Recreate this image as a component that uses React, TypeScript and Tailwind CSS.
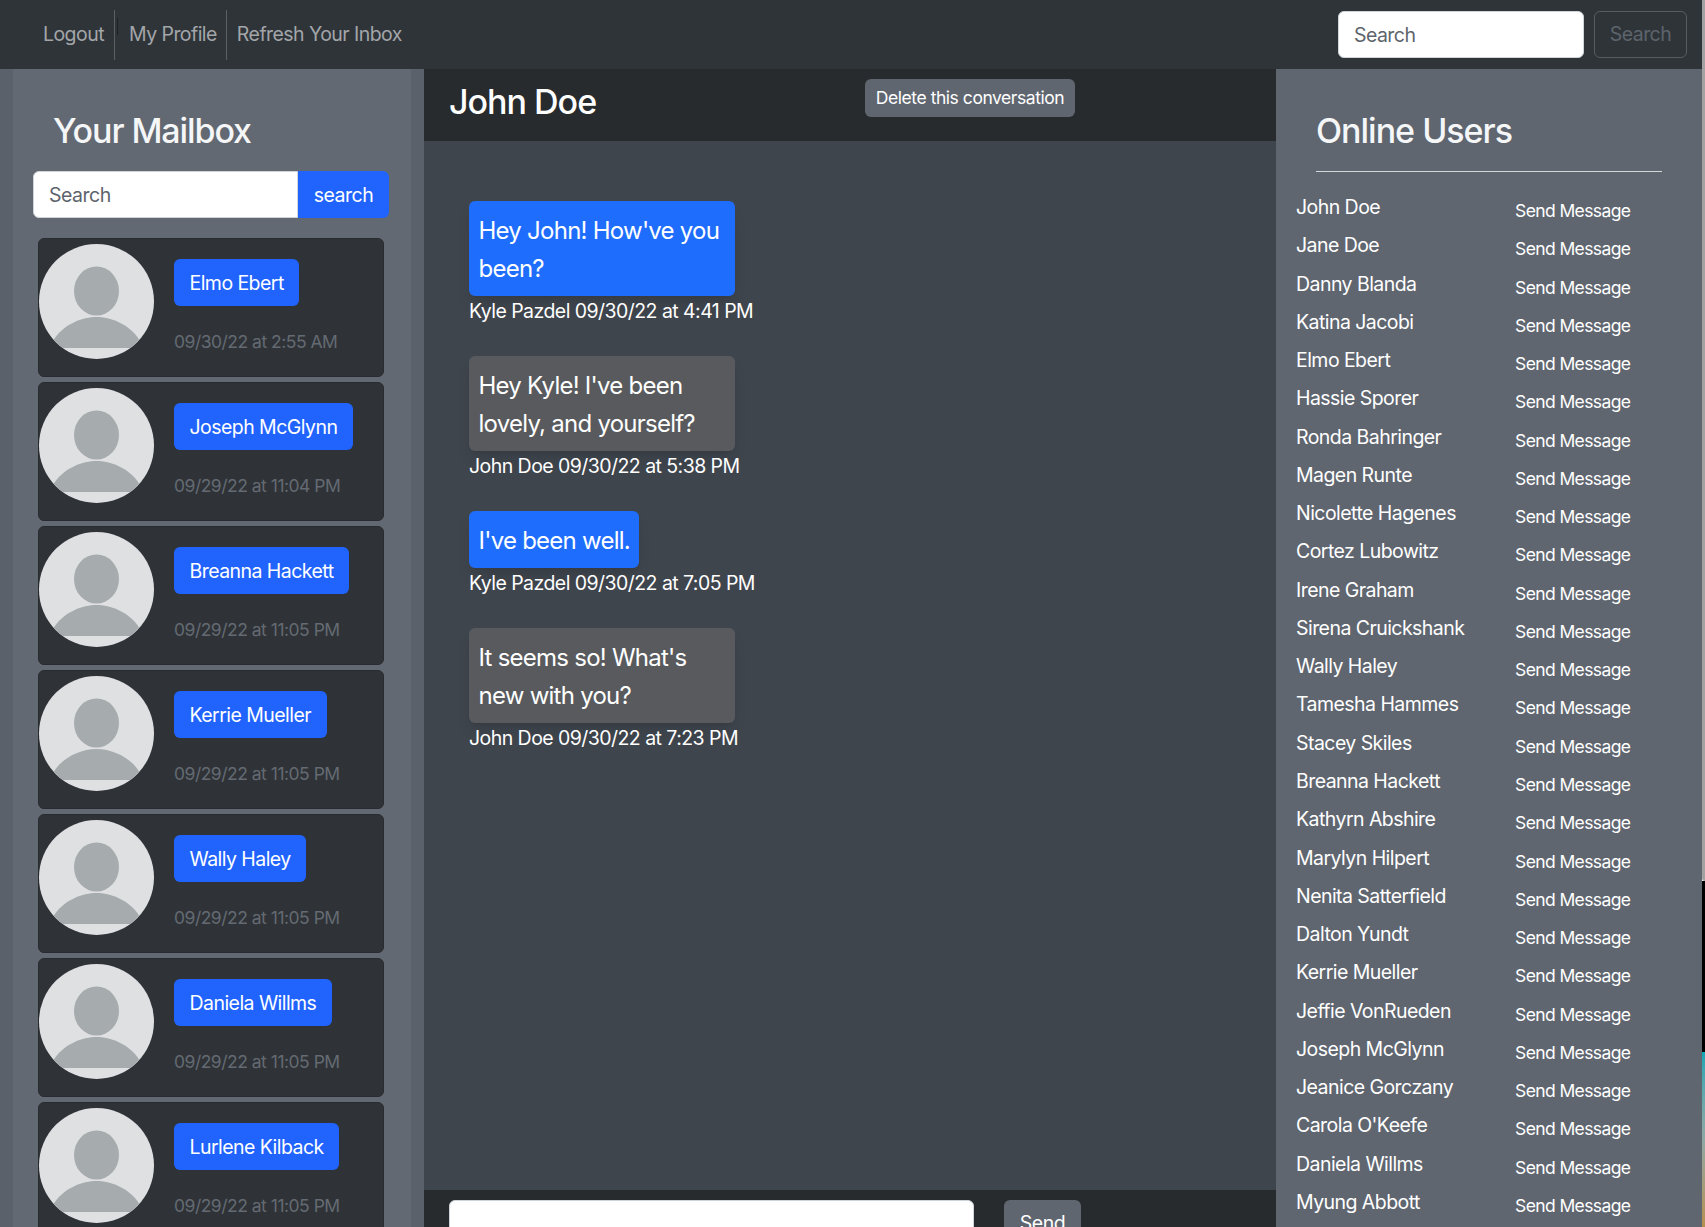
const FONT = "font-['Inter','Liberation_Sans',sans-serif]";

const MAILBOX = [
  { name: 'Elmo Ebert', date: '09/30/22 at 2:55 AM' },
  { name: 'Joseph McGlynn', date: '09/29/22 at 11:04 PM' },
  { name: 'Breanna Hackett', date: '09/29/22 at 11:05 PM' },
  { name: 'Kerrie Mueller', date: '09/29/22 at 11:05 PM' },
  { name: 'Wally Haley', date: '09/29/22 at 11:05 PM' },
  { name: 'Daniela Willms', date: '09/29/22 at 11:05 PM' },
  { name: 'Lurlene Kilback', date: '09/29/22 at 11:05 PM' },
];

const ONLINE = [
  'John Doe', 'Jane Doe', 'Danny Blanda', 'Katina Jacobi', 'Elmo Ebert', 'Hassie Sporer', 'Ronda Bahringer',
  'Magen Runte', 'Nicolette Hagenes', 'Cortez Lubowitz', 'Irene Graham', 'Sirena Cruickshank', 'Wally Haley',
  'Tamesha Hammes', 'Stacey Skiles', 'Breanna Hackett', 'Kathyrn Abshire', 'Marylyn Hilpert', 'Nenita Satterfield',
  'Dalton Yundt', 'Kerrie Mueller', 'Jeffie VonRueden', 'Joseph McGlynn', 'Jeanice Gorczany', "Carola O'Keefe",
  'Daniela Willms', 'Myung Abbott',
];

const MESSAGES = [
  { text: "Hey John! How've you been?", meta: 'Kyle Pazdel 09/30/22 at 4:41 PM', mine: true, fixed: true },
  { text: "Hey Kyle! I've been lovely, and yourself?", meta: 'John Doe 09/30/22 at 5:38 PM', mine: false, fixed: true },
  { text: "I've been well.", meta: 'Kyle Pazdel 09/30/22 at 7:05 PM', mine: true, fixed: false },
  { text: "It seems so! What's new with you?", meta: 'John Doe 09/30/22 at 7:23 PM', mine: false, fixed: true },
];

function Avatar() {
  return (
    <svg viewBox="0 0 115 115" className="h-[115px] w-[115px] shrink-0">
      <circle cx="57.5" cy="57.5" r="57.5" fill="#dfe0e2" />
      <g fill="#a6abae">
        <ellipse cx="57.5" cy="47" rx="22.5" ry="24.5" />
        <path d="M14.8 96 C22 83 40 73 57.5 73 C75 73 93 83 100.2 96 A57.5 57.5 0 0 1 91.3 104 L23.7 104 A57.5 57.5 0 0 1 14.8 96 Z" />
      </g>
    </svg>
  );
}

function MailCard({ name, date }: { name: string; date: string }) {
  return (
    <div className="flex h-[139px] shrink-0 items-start rounded-md border border-[#282c30] bg-[#2f3338] pt-[5px]">
      <Avatar />
      <div className="ml-5 flex flex-col items-start pt-[15px]">
        <button className="h-[47px] rounded-md bg-[#2164fd] pl-[15.5px] pr-[15.5px] pt-[2px] text-[19.5px] tracking-[-0.55px] text-white">{name}</button>
        <span className="mt-[23px] text-[17.5px] leading-[26px] text-[#646a72]">{date}</span>
      </div>
    </div>
  );
}

function Bubble({ text, meta, mine, fixed }: (typeof MESSAGES)[number]) {
  return (
    <div className="mb-[31px]">
      <div
        className={`${fixed ? 'w-[266px]' : 'w-fit'} rounded-md pb-[8px] pl-[9.5px] pr-[9px] pt-[11px] text-[24px] leading-[38px] tracking-[-0.75px] text-white shadow-lg ${mine ? 'bg-[#1e6dfd]' : 'bg-[#585a5d]'}`}
      >
        {text}
      </div>
      <div className="mt-[1px] text-[19.5px] leading-[28px] tracking-[-0.55px] text-white">{meta}</div>
    </div>
  );
}

export default function App() {
  return (
    <div className={`${FONT} flex h-[1227px] w-[1705px] overflow-hidden tracking-[-0.5px]`}>
      <div className="flex w-[1702px] shrink-0 flex-col bg-[#5f6670]">
        <nav className="flex h-[69px] shrink-0 items-center bg-[#2f3439] pl-[33px] pr-[15px] text-[19.5px] tracking-[-0.55px] text-[#a3a6a9]">
          <a className="flex h-[50px] items-center border-r border-[#5b6066] px-[10px]">Logout</a>
          <a className="relative flex h-[50px] items-center border-r border-[#5b6066] pl-[14px] pr-[9px]">
            <span className="absolute left-[2px] top-[8px] h-[17px] w-px bg-[#1f2225]" />
            My Profile
          </a>
          <a className="flex h-[50px] items-center pl-[10px]">Refresh Your Inbox</a>
          <div className="ml-auto flex gap-[10px]">
            <input
              placeholder="Search"
              className="h-[47px] w-[246px] rounded-md border border-[#ced4da] bg-white px-[15px] text-[19.5px] placeholder:text-[#5d646c]"
            />
            <button className="h-[47px] w-[93px] rounded-md border border-[#565c63] text-[19.5px] text-[#5d646c]">Search</button>
          </div>
        </nav>

        <div className="flex min-h-0 flex-1">
          <aside className="flex w-[424px] shrink-0 bg-[#5a616b] px-[13px]">
            <div className="flex w-full flex-col bg-[#626972] px-5">
              <h2 className="ml-[20px] mt-[38px] shrink-0 text-[34px] font-medium leading-[48px] tracking-[-1.1px] text-[#f5f6f7]">Your Mailbox</h2>
              <div className="mt-[16px] flex h-[47px] shrink-0">
                <input
                  placeholder="Search"
                  className="h-[47px] w-[265px] rounded-l-md border border-[#ced4da] bg-white px-[15px] text-[19.5px] placeholder:text-[#5d646c]"
                />
                <button className="h-[47px] w-[91px] rounded-r-md bg-[#2164fd] pt-[2px] text-[19.5px] text-white">search</button>
              </div>
              <div className="ml-[5px] mr-[7px] mt-[20px] flex flex-col gap-[5px]">
                {MAILBOX.map(m => (
                  <MailCard key={m.name} {...m} />
                ))}
              </div>
            </div>
          </aside>

          <main className="flex min-w-0 flex-1 flex-col bg-[#3f454d]">
            <header className="flex h-[72px] shrink-0 items-start bg-[#282b2e] pl-[25px]">
              <h1 className="mt-[9px] w-[416px] text-[34px] font-medium leading-[48px] tracking-[-1px] text-white">John Doe</h1>
              <button className="mt-[10px] h-[38px] w-[210px] rounded-md bg-[#5f6670] pt-[1px] text-[17.5px] tracking-[-0.45px] text-white">
                Delete this conversation
              </button>
            </header>
            <section className="flex-1 px-[45px] pt-[60px]">
              {MESSAGES.map(m => (
                <Bubble key={m.meta} {...m} />
              ))}
            </section>
            <footer className="flex h-[37px] shrink-0 gap-[30px] bg-[#282b2e] pl-[25px] pt-[10px]">
              <div className="h-[47px] w-[525px] shrink-0 rounded-md border border-[#ced4da] bg-white" />
              <button className="h-[47px] w-[77px] shrink-0 rounded-md bg-[#5f6670] text-[19.5px] text-white">Send</button>
            </footer>
          </main>

          <aside className="flex w-[426px] shrink-0 flex-col bg-[#5f6670] pl-5">
            <h2 className="ml-[20px] mt-[38px] shrink-0 text-[34px] font-medium leading-[48px] tracking-[-1px] text-[#f5f6f7]">Online Users</h2>
            <div className="ml-[20px] mt-[16px] h-px w-[346px] shrink-0 bg-[#d5d8db]" />
            <ul className="mt-[19px] flex flex-col">
              {ONLINE.map(name => (
                <li key={name} className="flex h-[38.27px] shrink-0 items-start">
                  <span className="w-[219px] text-[19.5px] leading-[32px] tracking-[-0.55px] text-white">{name}</span>
                  <span className="mt-[4px] text-[17.5px] leading-[32px] tracking-[-0.6px] text-white">Send Message</span>
                </li>
              ))}
            </ul>
          </aside>
        </div>
      </div>

      {/* sliver of desktop showing past the window edge */}
      <div className="flex w-[3px] shrink-0 flex-col">
        <div className="h-[881px] rounded-bl-sm bg-[#a2a2a2]" />
        <div className="h-[171px] bg-black" />
        <div className="flex-1 bg-gradient-to-b from-[#0aa6b4] via-[#8fa8a4] to-[#b58f4e]" />
      </div>
    </div>
  );
}
